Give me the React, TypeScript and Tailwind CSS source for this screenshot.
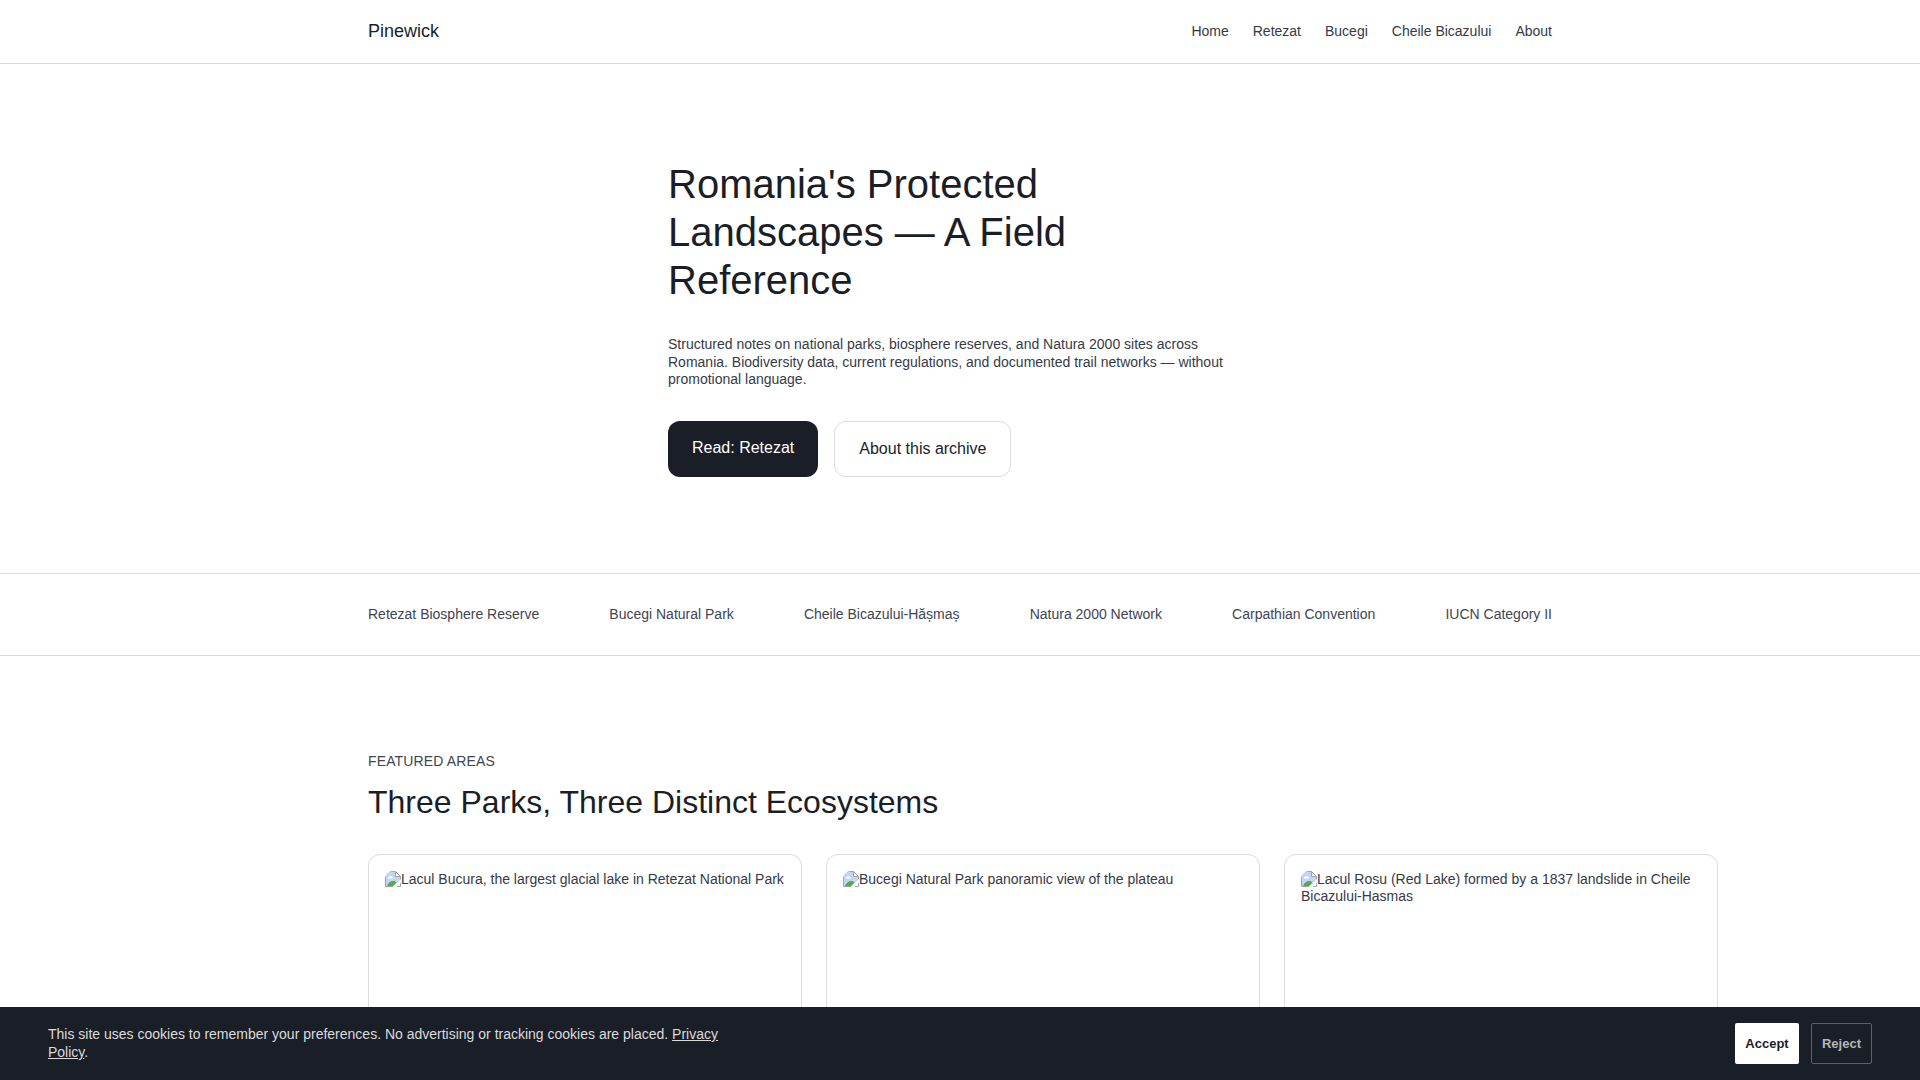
const navLinks = ['Home', 'Retezat', 'Bucegi', 'Cheile Bicazului', 'About'];

const designations = [
  'Retezat Biosphere Reserve',
  'Bucegi Natural Park',
  'Cheile Bicazului-Hășmaș',
  'Natura 2000 Network',
  'Carpathian Convention',
  'IUCN Category II',
];

const parks = [
  'Lacul Bucura, the largest glacial lake in Retezat National Park',
  'Bucegi Natural Park panoramic view of the plateau',
  'Lacul Rosu (Red Lake) formed by a 1837 landslide in Cheile Bicazului-Hasmas',
];

function MissingPictureIcon() {
  return (
    <svg className="inline-block h-4 w-4 align-[-3px]" viewBox="0 0 16 16" aria-hidden="true">
      <path d="M1 1h9.500L15 5.500V9L9 15H1z" fill="#c3d5f7" />
      <path d="M3 7c0-1 .9-1.500 1.700-1.300.5-1.100 2.300-1 2.500.3 1 0 1.300 1 .7 1.500H3.300z" fill="#fff" />
      <path d="M2 15c1.300-3.200 3.800-5 6-5 1.600 0 2.800.6 3.500 1.500L8 15z" fill="#56ad3a" />
      <path d="M10.500 1v4.500H15z" fill="#fff" />
      <path
        d="M.5 15.500V.5h10l5 5V8.500M10.500.5v5h5M.5 15.500H8M12 15.500h3.500V12"
        fill="none"
        stroke="#a3a3a3"
      />
    </svg>
  );
}

export default function App() {
  return (
    <div className="h-[1080px] overflow-hidden bg-white font-['Liberation_Sans',Arial,sans-serif] text-sm leading-[17.5px] text-[#363a45]">
      <header className="h-16 border-b border-[#dadbdd]">
        <div className="mx-auto flex h-full w-[1184px] items-center justify-between">
          <a className="pb-0.5 text-lg leading-[22px] text-[#1a1e27]">Pinewick</a>
          <nav className="flex gap-6">
            {navLinks.map((label) => (
              <a key={label}>{label}</a>
            ))}
          </nav>
        </div>
      </header>

      <section className="h-[509px] pt-24">
        <div className="mx-auto w-[584px]">
          <h1 className="w-[480px] text-[40px] leading-[48px] text-[#1a1e27]">
            Romania's Protected Landscapes — A Field Reference
          </h1>
          <p className="mt-8 w-[560px]">
            Structured notes on national parks, biosphere reserves, and Natura 2000 sites across Romania.
            Biodiversity data, current regulations, and documented trail networks — without promotional language.
          </p>
          <div className="mt-8 flex h-14 gap-4 text-base leading-[22px]">
            <a className="rounded-xl bg-[#1a1e27] px-6 py-4 text-white">Read: Retezat</a>
            <a className="rounded-xl border border-[#dadbdd] px-6 py-4 text-[#1a1e27]">About this archive</a>
          </div>
        </div>
      </section>

      <section className="h-[83px] border-y border-[#dadbdd]">
        <div className="mx-auto flex h-full w-[1184px] items-center justify-between text-[#41454f]">
          {designations.map((name) => (
            <span key={name}>{name}</span>
          ))}
        </div>
      </section>

      <section className="mx-auto w-[1184px] pt-[97px]">
        <p className="tracking-[0.01em] text-[#41454f]">FEATURED AREAS</p>
        <h2 className="mt-[11px] text-[32px] leading-10 text-[#1a1e27]">Three Parks, Three Distinct Ecosystems</h2>
        <div className="mt-8 grid w-[1350px] grid-cols-3 gap-6">
          {parks.map((alt) => (
            <article key={alt} className="h-[400px] rounded-xl border border-[#dadbdd] p-4">
              <div className="h-[240px] overflow-hidden rounded-lg">
                <MissingPictureIcon />
                {alt}
              </div>
            </article>
          ))}
        </div>
      </section>

      <aside className="fixed inset-x-0 bottom-0 flex h-[73px] items-center justify-between bg-[#1a1e27] px-12">
        <p className="w-[680px] pb-px leading-[18px] text-[#dadbdd]">
          This site uses cookies to remember your preferences. No advertising or tracking cookies are placed.{' '}
          <a className="underline">Privacy Policy</a>.
        </p>
        <div className="flex gap-3 text-[13px] font-bold">
          <button className="h-[41px] w-16 rounded-xs bg-white text-[#1a1e27]">Accept</button>
          <button className="h-[41px] w-[61px] rounded-xs border border-[#5c606a] text-[#b4b6ba]">Reject</button>
        </div>
      </aside>
    </div>
  );
}
